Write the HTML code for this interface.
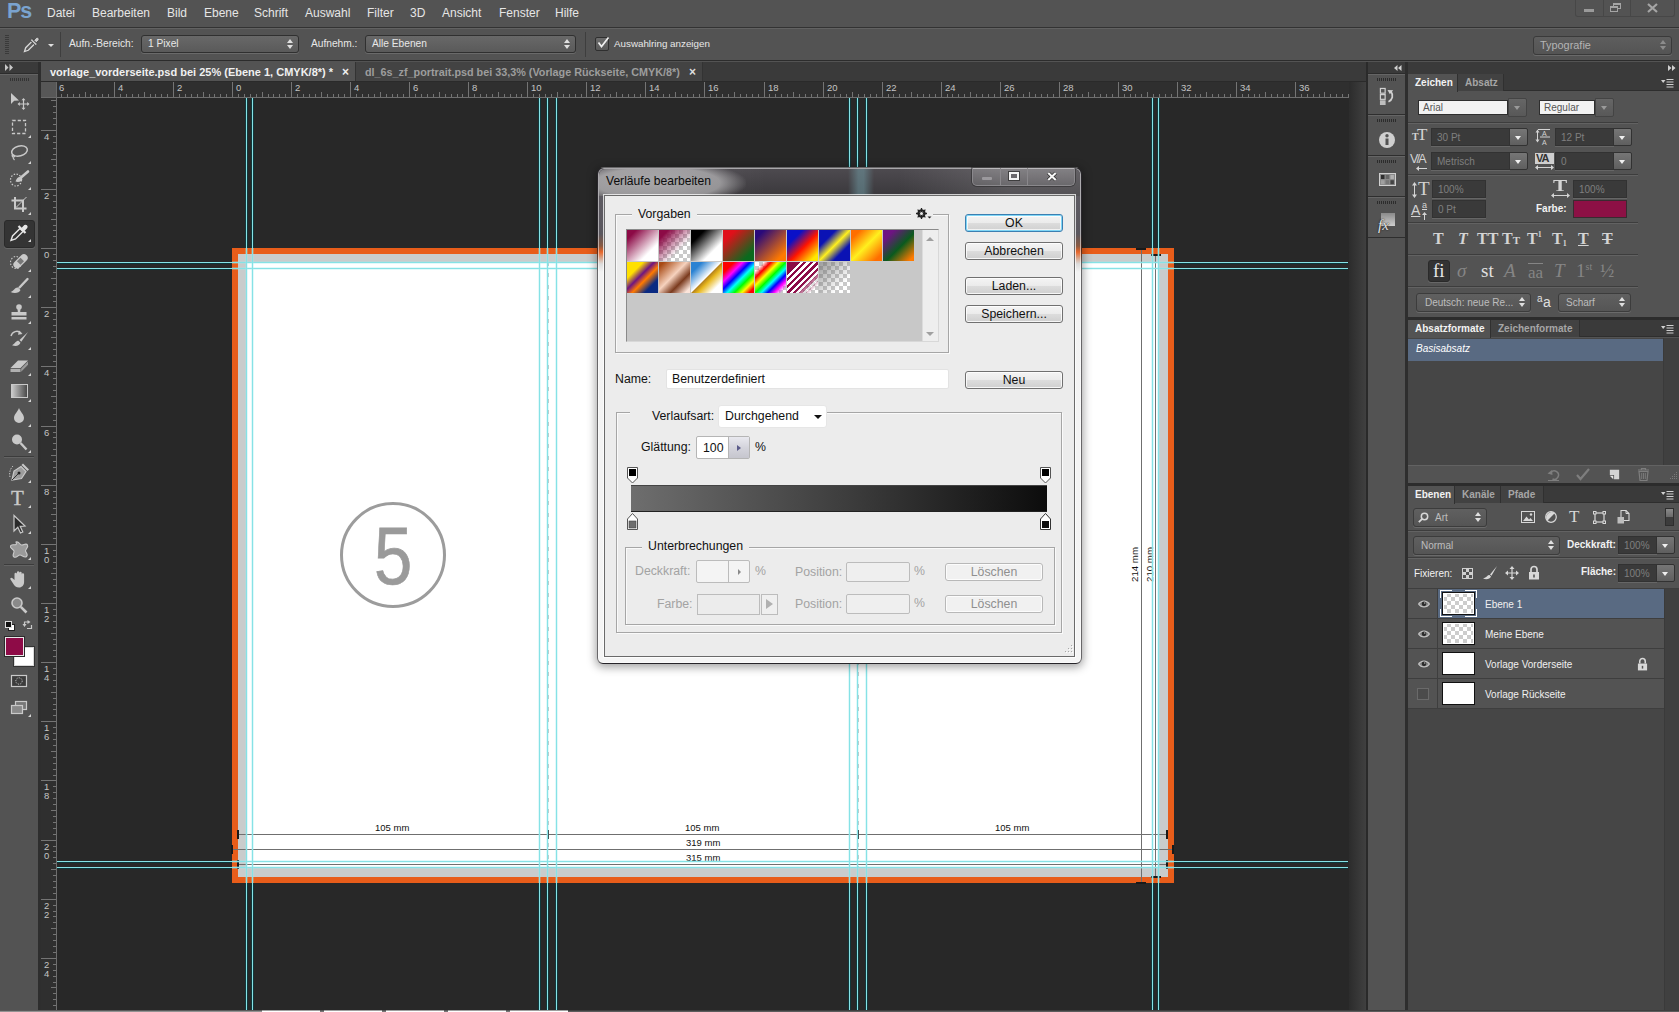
<!DOCTYPE html>
<html><head><meta charset="utf-8"><title>Photoshop</title>
<style>
*{box-sizing:border-box;margin:0;padding:0}
html,body{width:1679px;height:1012px;overflow:hidden;background:#535353}
body{position:relative;font-family:"Liberation Sans",sans-serif;font-size:11px;color:#dcdcdc}
.a{position:absolute}
.t{position:absolute;white-space:nowrap;line-height:1}
svg{position:absolute;overflow:visible}
/* menu */
#menubar{left:0;top:0;width:1679px;height:28px;background:#535353;border-bottom:1px solid #333}
#menubar .t{top:7px;font-size:12px;color:#e6e6e6}
#optbar{left:0;top:28px;width:1679px;height:33px;background:#535353;border-top:1px solid #626262;border-bottom:1px solid #2c2c2c}
.pdd{position:absolute;height:18px;border:1px solid #303030;border-radius:3px;background:linear-gradient(#686868,#5a5a5a);box-shadow:0 1px 0 #6a6a6a;color:#e8e8e8;font-size:10.2px;line-height:16px;padding-left:6px;white-space:nowrap}
.ud:before,.ud:after{content:"";position:absolute;right:5px;border-left:3px solid transparent;border-right:3px solid transparent}
.ud:before{top:3px;border-bottom:4px solid #e0e0e0}
.ud:after{top:9px;border-top:4px solid #e0e0e0}
.ud.dim:before{border-bottom-color:#8c8c8c}.ud.dim:after{border-top-color:#8c8c8c}
#tabbar{left:41px;top:62px;width:1325px;height:20px;background:#3a3a3a;border-bottom:1px solid #2a2a2a}
.dtab{position:absolute;top:0;height:19px;font-size:11px;font-weight:bold;line-height:20px;white-space:nowrap;padding-left:9px}
.rl{font-size:9.5px;color:#c4c4c4}
</style></head><body>
<!-- MENU BAR -->
<div id="menubar" class="a">
 <span class="t" style="left:7px;top:1px;font-size:21.5px;font-weight:bold;color:#7aa3cf;letter-spacing:-1.2px">Ps</span>
 <span class="t" style="left:47px">Datei</span>
 <span class="t" style="left:92px">Bearbeiten</span>
 <span class="t" style="left:167px">Bild</span>
 <span class="t" style="left:204px">Ebene</span>
 <span class="t" style="left:254px">Schrift</span>
 <span class="t" style="left:305px">Auswahl</span>
 <span class="t" style="left:367px">Filter</span>
 <span class="t" style="left:410px">3D</span>
 <span class="t" style="left:442px">Ansicht</span>
 <span class="t" style="left:499px">Fenster</span>
 <span class="t" style="left:555px">Hilfe</span>
 <!-- window controls -->
 <div class="a" style="left:1575px;top:0;width:100px;height:17px;border:1px solid #474747;border-top:none;border-radius:0 0 3px 3px"></div>
 <div class="a" style="left:1603px;top:0;width:1px;height:16px;background:#474747"></div>
 <div class="a" style="left:1630px;top:0;width:1px;height:16px;background:#474747"></div>
 <div class="a" style="left:1584px;top:9px;width:10px;height:3px;background:#9a9a9a"></div>
 <div class="a" style="left:1613px;top:3px;width:8px;height:6px;border:1px solid #a5a5a5;border-top-width:2px"></div>
 <div class="a" style="left:1610px;top:6px;width:8px;height:6px;border:1px solid #a5a5a5;border-top-width:2px;background:#535353"></div>
 <svg style="left:1647px;top:3px" width="11" height="10" viewBox="0 0 11 10"><path d="M1 1 L10 9 M10 1 L1 9" stroke="#a5a5a5" stroke-width="2.2"/></svg>
</div>
<!-- OPTIONS BAR -->
<div id="optbar" class="a">
 <div class="a" style="left:5px;top:6px;width:4px;height:19px;background:repeating-linear-gradient(#3a3a3a 0 1px,transparent 1px 2px)"></div>
 <!-- eyedropper icon -->
 <svg style="left:22px;top:5px" width="20" height="20" viewBox="0 0 20 20"><path d="M2.500 17.500 L3.700 13.700 L10.500 6.900 L13.100 9.500 L6.300 16.300 Z" fill="#5a5a5a" stroke="#dadada" stroke-width="1.300"/><path d="M9.300 5.700 L14.300 10.700" stroke="#3a3a3a" stroke-width="3.200"/><path d="M9.300 5.700 L14.300 10.700" stroke="#c4c4c4" stroke-width="1.800"/><path d="M11.800 6.200 L14.300 3.600 a1.900 1.900 0 0 1 2.600 2.600 L14.300 8.700 Z" fill="#cacaca" stroke="#3a3a3a" stroke-width=".8"/></svg>
 <div class="a" style="left:48px;top:15px;border-left:3.5px solid transparent;border-right:3.5px solid transparent;border-top:3px solid #e0e0e0"></div>
 <div class="a" style="left:60px;top:3px;width:1px;height:25px;background:#3e3e3e"></div>
 <span class="t" style="left:69px;top:10px;font-size:10.2px;color:#e8e8e8">Aufn.-Bereich:</span>
 <div class="pdd ud" style="left:141px;top:6px;width:158px">1 Pixel</div>
 <span class="t" style="left:311px;top:10px;font-size:10.2px;color:#e8e8e8">Aufnehm.:</span>
 <div class="pdd ud" style="left:365px;top:6px;width:211px">Alle Ebenen</div>
 <div class="a" style="left:585px;top:3px;width:1px;height:25px;background:#3e3e3e"></div>
 <div class="a" style="left:595px;top:8px;width:14px;height:14px;border:1px solid #2f2f2f;border-radius:2px;background:linear-gradient(#6b6b6b,#595959)"></div>
 <svg style="left:597px;top:7px" width="13" height="13" viewBox="0 0 13 13"><path d="M1.5 6.5 L4.5 10.5 L11.5 1.5" stroke="#f0f0f0" stroke-width="1.7" fill="none"/></svg>
 <span class="t" style="left:614px;top:10px;font-size:9.8px;color:#e8e8e8">Auswahlring anzeigen</span>
 <div class="pdd ud dim" style="left:1533px;top:7px;width:139px;height:19px;line-height:17px;font-size:10.9px;color:#b4b4b4;background:linear-gradient(#5e5e5e,#545454);border-color:#3a3a3a">Typografie</div>
</div>
<!-- DOC TAB BAR -->
<div id="tabbar" class="a">
 <div class="dtab" style="left:0;width:314px;background:#535353;color:#f0f0f0">vorlage_vorderseite.psd bei 25% (Ebene 1, CMYK/8*) *<span style="position:absolute;right:6px;top:0;font-size:12px">×</span></div>
 <div class="dtab" style="left:314px;width:348px;background:#434343;color:#9d9d9d;font-size:10.8px;border-left:1px solid #333;border-right:1px solid #333">dl_6s_zf_portrait.psd bei 33,3% (Vorlage Rückseite, CMYK/8*)<span style="position:absolute;right:6px;top:0;font-size:12px;color:#ddd">×</span></div>
</div>
<!-- TOOLBAR -->
<style>
#toolbar{left:0;top:62px;width:38px;height:948px;background:#535353}
.fly{position:absolute;left:28px;width:0;height:0;margin-top:-1px;border-left:3px solid transparent;border-bottom:3px solid #d4d4d4}
.ti{left:7px}
</style>
<div class="a" style="left:38px;top:62px;width:3px;height:948px;background:#2e2e2e"></div>
<div id="toolbar" class="a">
 <div class="a" style="left:0;top:0;width:38px;height:12px;background:#3a3a3a;border-bottom:1px solid #2c2c2c"></div>
 <svg style="left:5px;top:2px" width="9" height="7" viewBox="0 0 9 7"><path d="M0 0 L3.5 3.5 L0 7Z M4.5 0 L8 3.5 L4.5 7Z" fill="#c8c8c8"/></svg>
 <div class="a" style="left:0;top:12px;width:38px;height:1px;background:#646464"></div>
 <div class="a" style="left:10px;top:16px;width:20px;height:3px;background:repeating-linear-gradient(90deg,#333 0 1px,transparent 1px 2px)"></div>
 <!-- selected tool bg -->
 <div class="a" style="left:4px;top:158px;width:31px;height:28px;background:#343434;border:1px solid #2a2a2a;border-radius:3px;box-shadow:0 1px 0 #666"></div>
 <!-- move y=101 (rel 39) -->
 <svg class="ti" style="top:28px" width="24" height="24" viewBox="0 0 24 24"><path d="M4 3 L4 14 L7.2 10.8 L12 10.5 Z" fill="#c9c9c9"/><path d="M16.5 9.5v9M12 14h9" stroke="#c9c9c9" stroke-width="1.2"/><path d="M16.5 8l-2 2.3h4zM16.5 20l-2-2.3h4zM10.5 14l2.3-2v4zM22.5 14l-2.3-2v4z" fill="#c9c9c9"/></svg>
 <!-- marquee y=127 (65) -->
 <svg class="ti" style="top:53px" width="24" height="24" viewBox="0 0 24 24"><rect x="5.5" y="5.5" width="13" height="13" fill="none" stroke="#c9c9c9" stroke-width="1.3" stroke-dasharray="3.2 2"/></svg>
 <div class="fly" style="top:74px"></div>
 <!-- lasso y=153 (91) -->
 <svg class="ti" style="top:79px" width="24" height="24" viewBox="0 0 24 24"><ellipse cx="12.5" cy="10" rx="8" ry="5" transform="rotate(-15 12.5 10)" fill="none" stroke="#c9c9c9" stroke-width="1.5"/><path d="M6 13 c-1.5 1 -1 3 0.5 3 c1.5 0 1.5 -2 0 -2 c-1 0 -1 3 1 5" fill="none" stroke="#c9c9c9" stroke-width="1.2"/></svg>
 <div class="fly" style="top:100px"></div>
 <!-- quick select y=179 (117) -->
 <svg class="ti" style="top:105px" width="24" height="24" viewBox="0 0 24 24"><ellipse cx="9" cy="13" rx="5.5" ry="6" fill="none" stroke="#c9c9c9" stroke-width="1.2" stroke-dasharray="1.5 1.5"/><path d="M21 4.500 L14 10.500" stroke="#c9c9c9" stroke-width="2.600" stroke-linecap="round"/><path d="M13.500 10 c-2.500 -.5 -4 1.500 -5 4.500 c3 1 6.500 0 7 -2.500 Z" fill="#c9c9c9"/></svg>
 <div class="fly" style="top:126px"></div>
 <!-- crop y=204 (142) -->
 <svg class="ti" style="top:130px" width="24" height="24" viewBox="0 0 24 24"><path d="M8 5v11.500H19.500M4.500 8.500H16V20" fill="none" stroke="#c9c9c9" stroke-width="2"/><path d="M19.500 5 L9 15.500" stroke="#c9c9c9" stroke-width="1"/></svg>
 <div class="fly" style="top:151px"></div>
 <!-- eyedropper y=232 (170) -->
 <svg class="ti" style="top:158px" width="24" height="24" viewBox="0 0 24 24"><path d="M4 20.5 L5.5 16 L13 8.5 L16 11.5 L8.5 19 Z" fill="none" stroke="#e6e6e6" stroke-width="1.4"/><path d="M11.5 6 L18.5 13" stroke="#e6e6e6" stroke-width="2.2"/><path d="M14.5 8 L17.3 5 a2.2 2.2 0 0 1 3 3 L17.5 11 Z" fill="#e6e6e6"/></svg>
 <div class="fly" style="top:178px"></div>
 <!-- heal y=261 (199) -->
 <svg class="ti" style="top:187px" width="24" height="24" viewBox="0 0 24 24"><ellipse cx="9" cy="13.5" rx="5.5" ry="6" fill="none" stroke="#c9c9c9" stroke-width="1.1" stroke-dasharray="1.5 1.5"/><rect x="5" y="8.5" width="17" height="7.5" rx="3.7" transform="rotate(-45 13.5 12.2)" fill="#c9c9c9"/><rect x="11" y="9.7" width="5" height="5" transform="rotate(-45 13.5 12.2)" fill="#777"/></svg>
 <div class="fly" style="top:208px"></div>
 <!-- brush y=287 (225) -->
 <svg class="ti" style="top:213px" width="24" height="24" viewBox="0 0 24 24"><path d="M20.500 4 L12.500 12.500" stroke="#c9c9c9" stroke-width="2.400" stroke-linecap="round"/><path d="M11 12.500 c-3 -.5 -3.500 3 -7.500 4.500 c4 2 9 1 10 -2 Z" fill="#c9c9c9"/></svg>
 <div class="fly" style="top:234px"></div>
 <!-- stamp y=313 (251) -->
 <svg class="ti" style="top:239px" width="24" height="24" viewBox="0 0 24 24"><circle cx="12" cy="6" r="2.800" fill="#c9c9c9"/><path d="M10.500 7h3l-.3 4h6.300v3.500h-15V11h6.300z" fill="#c9c9c9"/><rect x="4.5" y="16" width="15" height="2.5" fill="#c9c9c9"/></svg>
 <div class="fly" style="top:260px"></div>
 <!-- history brush y=339 (277) -->
 <svg class="ti" style="top:265px" width="24" height="24" viewBox="0 0 24 24"><path d="M21 5 L12.5 13 L14.3 14.8 Z" fill="#c9c9c9"/><path d="M11.5 13.8 c-3 0 -3 2.5 -6.5 4.5 c4 1.5 7.5 0.5 8.5 -2.5 Z" fill="#c9c9c9"/><path d="M4 9 a6 6 0 0 1 10 -3" fill="none" stroke="#c9c9c9" stroke-width="1.4"/><path d="M12 3.5 l3.5 3.5 l-4.5 0.8z" fill="#c9c9c9"/></svg>
 <div class="fly" style="top:286px"></div>
 <!-- eraser y=365 (303) -->
 <svg class="ti" style="top:291px" width="24" height="24" viewBox="0 0 24 24"><path d="M3.5 15 L11 7.5 H21 L13.5 15 Z" fill="#c9c9c9"/><path d="M3.5 15.8 h10 v3.2 h-10z" fill="#b0b0b0"/><path d="M14.2 15.5 L21 8.6 v3.2 L14.2 18.8z" fill="#9a9a9a"/></svg>
 <div class="fly" style="top:312px"></div>
 <!-- gradient y=391 (329) -->
 <div class="a" style="left:11px;top:322px;width:17px;height:14px;border:1px solid #c9c9c9;background:linear-gradient(90deg,#c9c9c9,#4a4a4a)"></div>
 <div class="fly" style="top:338px"></div>
 <!-- blur y=416 (354) -->
 <svg class="ti" style="top:342px" width="24" height="24" viewBox="0 0 24 24"><path d="M12 4 c1.5 4 5 6.5 5 10 a5 5 0 0 1 -10 0 c0 -3.5 3.5 -6 5 -10z" fill="#c9c9c9"/></svg>
 <div class="fly" style="top:363px"></div>
 <!-- dodge y=442 (380) -->
 <svg class="ti" style="top:368px" width="24" height="24" viewBox="0 0 24 24"><circle cx="10" cy="9.5" r="5" fill="#c9c9c9"/><path d="M13.5 13 L19.5 19.5" stroke="#c9c9c9" stroke-width="2.4"/></svg>
 <div class="fly" style="top:389px"></div>
 <div class="a" style="left:4px;top:394px;width:30px;height:1px;background:#3c3c3c"></div><div class="a" style="left:4px;top:395px;width:30px;height:1px;background:#636363"></div>
 <!-- pen y=472 (410) -->
 <svg class="ti" style="top:398px" width="24" height="24" viewBox="0 0 24 24"><path d="M5 20 L7 11 L14 6.5 L19 11.5 L14.5 18.5 Z" fill="#9c9c9c" stroke="#c9c9c9" stroke-width="1.2"/><path d="M5 20 L11.5 13.5" stroke="#333" stroke-width="1"/><circle cx="12" cy="13" r="1.500" fill="#222"/><path d="M14.5 5 L20.5 11 L22 9.5 L16 3.5z" fill="#c9c9c9"/><path d="M3 17 c-1 -4 0 -8 3 -11" fill="none" stroke="#c9c9c9" stroke-width="1" stroke-dasharray="1.3 1.3"/></svg>
 <div class="fly" style="top:419px"></div>
 <!-- T y=497 (435) -->
 <span class="t" style="left:11px;top:426px;font-family:'Liberation Serif',serif;font-size:21px;color:#c9c9c9;-webkit-text-stroke:.35px #c9c9c9">T</span>
 <div class="fly" style="top:444px"></div>
 <!-- path select y=524 (462) -->
 <svg class="ti" style="top:450px" width="24" height="24" viewBox="0 0 24 24"><path d="M7 3.5 L7 19 L10.8 15.3 L13.5 21 L15.8 20 L13.2 14.3 L18 14 Z" fill="#2a2a2a" stroke="#c9c9c9" stroke-width="1.2"/></svg>
 <div class="fly" style="top:470px"></div>
 <!-- shape y=550 (488) -->
 <svg class="ti" style="top:476px" width="24" height="24" viewBox="0 0 24 24"><path d="M9 4 c3 -1 3.5 2.5 5.5 3 c2 .5 4.5 -2.5 6 0 c1.5 2.500 -2.500 4 -2 6 c.5 2 3 3.500 1 5.500 c-2 2 -4.500 -1.500 -6.500 -1.500 c-2 0 -3.500 3.500 -6 2 c-2.500 -1.500 .5 -4 0 -6 c-.5 -2 -4.500 -2.500 -3.500 -5 c1 -2.500 4 -.5 5.500 -1.500 c1.500 -1 -.5 -2 0 -2.500z" fill="#9a9a9a" stroke="#c9c9c9" stroke-width="1.1"/></svg>
 <div class="fly" style="top:496px"></div>
 <div class="a" style="left:4px;top:502px;width:30px;height:1px;background:#3c3c3c"></div><div class="a" style="left:4px;top:503px;width:30px;height:1px;background:#636363"></div>
 <!-- hand y=579 (517) -->
 <svg class="ti" style="top:505px" width="24" height="24" viewBox="0 0 24 24"><path d="M7.500 13 V7 a1.200 1.200 0 0 1 2.400 0 V5.500 a1.200 1.200 0 0 1 2.400 0 V6 a1.200 1.200 0 0 1 2.400 0 V7.500 a1.200 1.200 0 0 1 2.400 0 V15 c0 3 -2 5.500 -5 5.500 c-3 0 -4.500 -1.500 -6 -4 L3.500 12.500 c-.8 -1.500 1 -2.500 2 -1.200z" fill="#c9c9c9"/></svg>
 <div class="fly" style="top:525px"></div>
 <!-- zoom y=605 (543) -->
 <svg class="ti" style="top:531px" width="24" height="24" viewBox="0 0 24 24"><circle cx="10" cy="10" r="5" fill="#8a8a8a" stroke="#c9c9c9" stroke-width="1.6"/><path d="M13.800 13.800 L19.500 19.500" stroke="#c9c9c9" stroke-width="2.600"/></svg>
 <!-- default / swap colors y=625 (563) -->
 <div class="a" style="left:8px;top:562px;width:7px;height:7px;background:#fff;border:1px solid #222"></div>
 <div class="a" style="left:5px;top:559px;width:7px;height:7px;background:#111;border:1px solid #ddd"></div>
 <svg style="left:22px;top:557px" width="12" height="12" viewBox="0 0 12 12"><path d="M2.500 5.500 V3 H7 M5 9.500 H9.500 V6" fill="none" stroke="#c9c9c9" stroke-width="1.200"/><path d="M2.500 8 L0.500 5 h4z M8.500 3 L5.500 1 v4z" fill="#c9c9c9"/></svg>
 <!-- fg/bg y 637-665 -->
 <div class="a" style="left:14px;top:585px;width:20px;height:19px;background:#fff;border:1px solid #d9d9d9;box-shadow:0 0 0 1px #333"></div>
 <div class="a" style="left:5px;top:575px;width:19px;height:19px;background:#8e0b47;border:1px solid #e8e8e8;box-shadow:0 0 0 1px #2b2b2b"></div>
 <!-- quick mask y=681 (619) -->
 <svg class="ti" style="top:607px" width="24" height="24" viewBox="0 0 24 24"><rect x="4.500" y="6.500" width="15" height="11" fill="#3c3c3c" stroke="#c9c9c9" stroke-width="1.200"/><circle cx="12" cy="12" r="3.200" fill="none" stroke="#c9c9c9" stroke-width="1" stroke-dasharray="1.200 1.200"/></svg>
 <!-- screen mode y=707 (645) -->
 <svg class="ti" style="top:633px" width="24" height="24" viewBox="0 0 24 24"><rect x="8.500" y="6.500" width="11" height="8" fill="#777" stroke="#c9c9c9" stroke-width="1.200"/><rect x="4.500" y="10.500" width="11" height="8" fill="#8a8a8a" stroke="#c9c9c9" stroke-width="1.200"/></svg>
 <div class="fly" style="top:653px"></div>
</div>
<!-- RULERS -->
<div class="a" style="left:41px;top:82px;width:16px;height:16px;background:#575757;border-right:1px solid #6a6a6a;border-bottom:1px solid #6a6a6a"></div>
<div class="a" id="hruler" style="left:57px;top:82px;width:1292px;height:16px;background:#2f2f2f;border-bottom:1px solid #6e6e6e;overflow:hidden">
<svg style="left:0;top:0" width="1292" height="16"><path d="M4.5 15v-3M10.5 15v-3M16.5 15v-3M22.5 15v-3M28.5 15v-5M33.5 15v-3M39.5 15v-3M45.5 15v-3M51.5 15v-3M57.5 15v-15M63.5 15v-3M69.5 15v-3M75.5 15v-3M81.5 15v-3M87.5 15v-5M93.5 15v-3M98.5 15v-3M104.5 15v-3M110.5 15v-3M116.5 15v-15M122.5 15v-3M128.5 15v-3M134.5 15v-3M140.5 15v-3M146.5 15v-5M152.5 15v-3M157.5 15v-3M163.5 15v-3M169.5 15v-3M175.5 15v-15M181.5 15v-3M187.5 15v-3M193.5 15v-3M199.5 15v-3M205.5 15v-5M211.5 15v-3M216.5 15v-3M222.5 15v-3M228.5 15v-3M234.5 15v-15M240.5 15v-3M246.5 15v-3M252.5 15v-3M258.5 15v-3M264.5 15v-5M270.5 15v-3M276.5 15v-3M281.5 15v-3M287.5 15v-3M293.5 15v-15M299.5 15v-3M305.5 15v-3M311.5 15v-3M317.5 15v-3M323.5 15v-5M329.5 15v-3M335.5 15v-3M340.5 15v-3M346.5 15v-3M352.5 15v-15M358.5 15v-3M364.5 15v-3M370.5 15v-3M376.5 15v-3M382.5 15v-5M388.5 15v-3M394.5 15v-3M400.5 15v-3M405.5 15v-3M411.5 15v-15M417.5 15v-3M423.5 15v-3M429.5 15v-3M435.5 15v-3M441.5 15v-5M447.5 15v-3M453.5 15v-3M459.5 15v-3M464.5 15v-3M470.5 15v-15M476.5 15v-3M482.5 15v-3M488.5 15v-3M494.5 15v-3M500.5 15v-5M506.5 15v-3M512.5 15v-3M518.5 15v-3M524.5 15v-3M529.5 15v-15M535.5 15v-3M541.5 15v-3M547.5 15v-3M553.5 15v-3M559.5 15v-5M565.5 15v-3M571.5 15v-3M577.5 15v-3M583.5 15v-3M588.5 15v-15M594.5 15v-3M600.5 15v-3M606.5 15v-3M612.5 15v-3M618.5 15v-5M624.5 15v-3M630.5 15v-3M636.5 15v-3M642.5 15v-3M647.5 15v-15M653.5 15v-3M659.5 15v-3M665.5 15v-3M671.5 15v-3M677.5 15v-5M683.5 15v-3M689.5 15v-3M695.5 15v-3M701.5 15v-3M707.5 15v-15M712.5 15v-3M718.5 15v-3M724.5 15v-3M730.5 15v-3M736.5 15v-5M742.5 15v-3M748.5 15v-3M754.5 15v-3M760.5 15v-3M766.5 15v-15M771.5 15v-3M777.5 15v-3M783.5 15v-3M789.5 15v-3M795.5 15v-5M801.5 15v-3M807.5 15v-3M813.5 15v-3M819.5 15v-3M825.5 15v-15M831.5 15v-3M836.5 15v-3M842.5 15v-3M848.5 15v-3M854.5 15v-5M860.5 15v-3M866.5 15v-3M872.5 15v-3M878.5 15v-3M884.5 15v-15M890.5 15v-3M895.5 15v-3M901.5 15v-3M907.5 15v-3M913.5 15v-5M919.5 15v-3M925.5 15v-3M931.5 15v-3M937.5 15v-3M943.5 15v-15M949.5 15v-3M954.5 15v-3M960.5 15v-3M966.5 15v-3M972.5 15v-5M978.5 15v-3M984.5 15v-3M990.5 15v-3M996.5 15v-3M1002.5 15v-15M1008.5 15v-3M1014.5 15v-3M1019.5 15v-3M1025.5 15v-3M1031.5 15v-5M1037.5 15v-3M1043.5 15v-3M1049.5 15v-3M1055.5 15v-3M1061.5 15v-15M1067.5 15v-3M1073.5 15v-3M1078.5 15v-3M1084.5 15v-3M1090.5 15v-5M1096.5 15v-3M1102.5 15v-3M1108.5 15v-3M1114.5 15v-3M1120.5 15v-15M1126.5 15v-3M1132.5 15v-3M1138.5 15v-3M1143.5 15v-3M1149.5 15v-5M1155.5 15v-3M1161.5 15v-3M1167.5 15v-3M1173.5 15v-3M1179.5 15v-15M1185.5 15v-3M1191.5 15v-3M1197.5 15v-3M1202.5 15v-3M1208.5 15v-5M1214.5 15v-3M1220.5 15v-3M1226.5 15v-3M1232.5 15v-3M1238.5 15v-15M1244.5 15v-3M1250.5 15v-3M1256.5 15v-3M1262.5 15v-3M1267.5 15v-5M1273.5 15v-3M1279.5 15v-3M1285.5 15v-3M1291.5 15v-3" stroke="#747474" stroke-width="1" shape-rendering="crispEdges" fill="none"/></svg>
<span class="t rl" style="left:2px;top:1px">6</span>
<span class="t rl" style="left:61px;top:1px">4</span>
<span class="t rl" style="left:120px;top:1px">2</span>
<span class="t rl" style="left:179px;top:1px">0</span>
<span class="t rl" style="left:238px;top:1px">2</span>
<span class="t rl" style="left:297px;top:1px">4</span>
<span class="t rl" style="left:356px;top:1px">6</span>
<span class="t rl" style="left:415px;top:1px">8</span>
<span class="t rl" style="left:474px;top:1px">10</span>
<span class="t rl" style="left:533px;top:1px">12</span>
<span class="t rl" style="left:592px;top:1px">14</span>
<span class="t rl" style="left:651px;top:1px">16</span>
<span class="t rl" style="left:711px;top:1px">18</span>
<span class="t rl" style="left:770px;top:1px">20</span>
<span class="t rl" style="left:829px;top:1px">22</span>
<span class="t rl" style="left:888px;top:1px">24</span>
<span class="t rl" style="left:947px;top:1px">26</span>
<span class="t rl" style="left:1006px;top:1px">28</span>
<span class="t rl" style="left:1065px;top:1px">30</span>
<span class="t rl" style="left:1124px;top:1px">32</span>
<span class="t rl" style="left:1183px;top:1px">34</span>
<span class="t rl" style="left:1242px;top:1px">36</span>
</div>
<div class="a" id="vruler" style="left:41px;top:98px;width:16px;height:912px;background:#2f2f2f;border-right:1px solid #6e6e6e;overflow:hidden">
<svg style="left:0;top:0" width="16" height="912"><path d="M15 2.5h-5M15 8.5h-3M15 14.5h-3M15 20.5h-3M15 26.5h-3M15 32.5h-15M15 38.5h-3M15 44.5h-3M15 50.5h-3M15 56.5h-3M15 61.5h-5M15 67.5h-3M15 73.5h-3M15 79.5h-3M15 85.5h-3M15 91.5h-15M15 97.5h-3M15 103.5h-3M15 109.5h-3M15 115.5h-3M15 121.5h-5M15 127.5h-3M15 132.5h-3M15 138.5h-3M15 144.5h-3M15 150.5h-15M15 156.5h-3M15 162.5h-3M15 168.5h-3M15 174.5h-3M15 180.5h-5M15 186.5h-3M15 192.5h-3M15 198.5h-3M15 203.5h-3M15 209.5h-15M15 215.5h-3M15 221.5h-3M15 227.5h-3M15 233.5h-3M15 239.5h-5M15 245.5h-3M15 251.5h-3M15 257.5h-3M15 263.5h-3M15 268.5h-15M15 274.5h-3M15 280.5h-3M15 286.5h-3M15 292.5h-3M15 298.5h-5M15 304.5h-3M15 310.5h-3M15 316.5h-3M15 322.5h-3M15 328.5h-15M15 334.5h-3M15 339.5h-3M15 345.5h-3M15 351.5h-3M15 357.5h-5M15 363.5h-3M15 369.5h-3M15 375.5h-3M15 381.5h-3M15 387.5h-15M15 393.5h-3M15 399.5h-3M15 405.5h-3M15 410.5h-3M15 416.5h-5M15 422.5h-3M15 428.5h-3M15 434.5h-3M15 440.5h-3M15 446.5h-15M15 452.5h-3M15 458.5h-3M15 464.5h-3M15 470.5h-3M15 475.5h-5M15 481.5h-3M15 487.5h-3M15 493.5h-3M15 499.5h-3M15 505.5h-15M15 511.5h-3M15 517.5h-3M15 523.5h-3M15 529.5h-3M15 535.5h-5M15 541.5h-3M15 546.5h-3M15 552.5h-3M15 558.5h-3M15 564.5h-15M15 570.5h-3M15 576.5h-3M15 582.5h-3M15 588.5h-3M15 594.5h-5M15 600.5h-3M15 606.5h-3M15 611.5h-3M15 617.5h-3M15 623.5h-15M15 629.5h-3M15 635.5h-3M15 641.5h-3M15 647.5h-3M15 653.5h-5M15 659.5h-3M15 665.5h-3M15 671.5h-3M15 677.5h-3M15 682.5h-15M15 688.5h-3M15 694.5h-3M15 700.5h-3M15 706.5h-3M15 712.5h-5M15 718.5h-3M15 724.5h-3M15 730.5h-3M15 736.5h-3M15 742.5h-15M15 748.5h-3M15 753.5h-3M15 759.5h-3M15 765.5h-3M15 771.5h-5M15 777.5h-3M15 783.5h-3M15 789.5h-3M15 795.5h-3M15 801.5h-15M15 807.5h-3M15 813.5h-3M15 818.5h-3M15 824.5h-3M15 830.5h-5M15 836.5h-3M15 842.5h-3M15 848.5h-3M15 854.5h-3M15 860.5h-15M15 866.5h-3M15 872.5h-3M15 878.5h-3M15 884.5h-3M15 889.5h-5M15 895.5h-3M15 901.5h-3M15 907.5h-3" stroke="#747474" stroke-width="1" shape-rendering="crispEdges" fill="none"/></svg>
<span class="t rl" style="left:3px;top:34px">4</span>
<span class="t rl" style="left:3px;top:93px">2</span>
<span class="t rl" style="left:3px;top:152px">0</span>
<span class="t rl" style="left:3px;top:211px">2</span>
<span class="t rl" style="left:3px;top:270px">4</span>
<span class="t rl" style="left:3px;top:330px">6</span>
<span class="t rl" style="left:3px;top:389px">8</span>
<span class="t rl" style="left:3px;top:448px">1</span>
<span class="t rl" style="left:3px;top:457px">0</span>
<span class="t rl" style="left:3px;top:507px">1</span>
<span class="t rl" style="left:3px;top:516px">2</span>
<span class="t rl" style="left:3px;top:566px">1</span>
<span class="t rl" style="left:3px;top:575px">4</span>
<span class="t rl" style="left:3px;top:625px">1</span>
<span class="t rl" style="left:3px;top:634px">6</span>
<span class="t rl" style="left:3px;top:684px">1</span>
<span class="t rl" style="left:3px;top:693px">8</span>
<span class="t rl" style="left:3px;top:744px">2</span>
<span class="t rl" style="left:3px;top:753px">0</span>
<span class="t rl" style="left:3px;top:803px">2</span>
<span class="t rl" style="left:3px;top:812px">2</span>
<span class="t rl" style="left:3px;top:862px">2</span>
<span class="t rl" style="left:3px;top:871px">4</span>
</div>
<!-- CANVAS -->
<style>
#canvas{left:57px;top:98px;width:1292px;height:912px;background:#282828;overflow:hidden}
#cv{position:absolute;left:-57px;top:-98px;width:1679px;height:1012px}
.vg{position:absolute;top:98px;width:1px;height:912px;background:#86e2e6}
.gd .vg{box-shadow:-1px 0 0 rgba(160,236,240,.3),1px 0 0 rgba(160,236,240,.3)}
.gs .vg{box-shadow:-1px 0 0 rgba(0,70,74,.55),1px 0 0 rgba(0,70,74,.55)}
.hg{position:absolute;left:57px;height:1px;width:1291px;background:#86e2e6}
.gd .hg{box-shadow:0 -1px 0 rgba(160,236,240,.3),0 1px 0 rgba(160,236,240,.3)}
.gs .hg{box-shadow:0 1px 0 rgba(0,60,64,.7)}
.dl{position:absolute;background:#6f6f6f}
.tk{position:absolute;background:#1a1a1a}
.dim{position:absolute;font-size:9.5px;color:#111;white-space:nowrap;line-height:1}
</style>
<div id="canvas" class="a"><div id="cv">
 <div class="gs">
 <!-- guides under -->
 <div class="hg" style="top:262px"></div><div class="hg" style="top:268px"></div>
 <div class="hg" style="top:861px"></div><div class="hg" style="top:867px"></div>
 <div class="vg" style="left:246px"></div><div class="vg" style="left:252px"></div>
 <div class="vg" style="left:539px"></div><div class="vg" style="left:547px"></div><div class="vg" style="left:556px"></div>
 <div class="vg" style="left:849px"></div><div class="vg" style="left:857px"></div><div class="vg" style="left:866px"></div>
 <div class="vg" style="left:1152px"></div><div class="vg" style="left:1158px"></div>
 </div>
 <!-- document -->
 <div class="a" style="left:232px;top:248px;width:942px;height:635px;background:#e85d1a"></div>
 <div class="a" style="left:238px;top:254px;width:930px;height:623px;background:#c9cccc"></div>
 <div class="a" style="left:246px;top:262px;width:913px;height:606px;background:#fff"></div>
 <!-- fold dashed lines -->
 <div class="a" style="left:548px;top:262px;width:1px;height:606px;background:repeating-linear-gradient(#c2c2c2 0 4px,transparent 4px 11.400px)"></div>
 <div class="a" style="left:858px;top:262px;width:1px;height:606px;background:repeating-linear-gradient(#c2c2c2 0 4px,transparent 4px 11.400px)"></div>
 <!-- circle 5 -->
 <div class="a" style="left:340px;top:502px;width:106px;height:106px;border:3px solid #9c9c9c;border-radius:50%"></div>
 <span class="t" style="left:373.600px;top:515.800px;font-size:81px;color:#9a9a9a;-webkit-text-stroke:.7px #9a9a9a;transform:scaleX(.85);transform-origin:0 0">5</span>
 <!-- dimension lines -->
 <div class="dl" style="left:238px;top:834px;width:930px;height:1px"></div>
 <div class="dl" style="left:232px;top:849px;width:942px;height:1px"></div>
 <div class="dl" style="left:238px;top:864px;width:930px;height:1px"></div>
 <div class="dl" style="left:1141px;top:248px;width:1px;height:635px"></div>
 <div class="dl" style="left:1155px;top:254px;width:1px;height:623px"></div>
 <div class="tk" style="left:237px;top:830px;width:2px;height:9px"></div>
 <div class="tk" style="left:547px;top:830px;width:2px;height:9px"></div>
 <div class="tk" style="left:857px;top:830px;width:2px;height:9px"></div>
 <div class="tk" style="left:1166px;top:830px;width:2px;height:9px"></div>
 <div class="tk" style="left:231px;top:845px;width:2px;height:9px"></div>
 <div class="tk" style="left:1172px;top:845px;width:2px;height:9px"></div>
 <div class="tk" style="left:237px;top:860px;width:2px;height:9px"></div>
 <div class="tk" style="left:1166px;top:860px;width:2px;height:9px"></div>
 <div class="tk" style="left:1136px;top:248px;width:10px;height:2px"></div>
 <div class="tk" style="left:1136px;top:882px;width:10px;height:2px"></div>
 <div class="tk" style="left:1151px;top:254px;width:10px;height:2px"></div>
 <div class="tk" style="left:1151px;top:876px;width:10px;height:2px"></div>
 <span class="dim" style="left:375px;top:823px">105 mm</span>
 <span class="dim" style="left:685px;top:823px">105 mm</span>
 <span class="dim" style="left:995px;top:823px">105 mm</span>
 <span class="dim" style="left:685px;top:838px;background:#fff;padding:0 1px">319 mm</span>
 <span class="dim" style="left:685px;top:853px;background:#fff;padding:0 1px">315 mm</span>
 <span class="dim" style="left:1130px;top:582px;transform:rotate(-90deg);transform-origin:0 0;font-size:9.7px">214 mm</span>
 <span class="dim" style="left:1145px;top:582px;transform:rotate(-90deg);transform-origin:0 0;font-size:9.7px">210 mm</span>
 <div class="a" style="left:232px;top:248px;width:942px;height:635px;overflow:hidden"><div class="a gd" style="left:-232px;top:-248px;width:1679px;height:1012px">
 <!-- guides -->
 <div class="hg" style="top:262px"></div><div class="hg" style="top:268px"></div>
 <div class="hg" style="top:861px"></div><div class="hg" style="top:867px"></div>
 <div class="vg" style="left:246px"></div><div class="vg" style="left:252px"></div>
 <div class="vg" style="left:539px"></div><div class="vg" style="left:547px"></div><div class="vg" style="left:556px"></div>
 <div class="vg" style="left:849px"></div><div class="vg" style="left:857px"></div><div class="vg" style="left:866px"></div>
 <div class="vg" style="left:1152px"></div><div class="vg" style="left:1158px"></div>
 </div></div>
</div></div>
<div class="a" style="left:1349px;top:82px;width:17px;height:928px;background:linear-gradient(90deg,#2c2c2c,#404040)"></div>
<div class="a" style="left:1366px;top:62px;width:2px;height:948px;background:#2a2a2a"></div>
<!-- DIALOG -->
<style>
#dlg{left:597px;top:167px;width:485px;height:497px;border-radius:7px 7px 6px 6px;border:1px solid rgba(10,8,12,.6);background-clip:padding-box;box-shadow:0 2px 10px 1px rgba(0,0,0,.38),inset 0 0 0 1px rgba(255,255,255,.5);
 background:linear-gradient(#514e54 0,#5e5b62 28px,#5a575e 66px,#8a5a42 78px,#e9672a 84px,#d9a58a 90px,#dcdcdc 96px,#f3f3f3 104px,#f5f5f5 100%)}
#dlg .tbar{left:1px;top:1px;width:481px;height:27px;border-radius:6px 6px 0 0;background:linear-gradient(90deg,rgba(255,255,255,.1),rgba(255,255,255,0) 35%,rgba(255,255,255,0) 62%,rgba(255,255,255,.13) 85%,rgba(255,255,255,.13)),linear-gradient(#4d4a4f,#3a383c);overflow:hidden}
#cl{left:6px;top:27px;width:471px;height:462px;background:#ececec;border:1px solid #6a6a6a;box-shadow:0 0 0 1px rgba(255,255,255,.75);color:#111;font-size:12px}
.gb{position:absolute;border:1px solid #a6a6a6;box-shadow:inset 1px 1px 0 #fafafa,1px 1px 0 #fafafa}
.gl{position:absolute;background:#ececec;padding:0 6px;line-height:14px;white-space:nowrap;font-size:12.3px}
.wb{position:absolute;width:98px;height:18px;border:1px solid #707070;border-radius:3px;background:linear-gradient(#f4f4f4 0,#ebebeb 48%,#dcdcdc 52%,#cfcfcf 100%);box-shadow:inset 0 0 0 1px rgba(255,255,255,.8);text-align:center;line-height:16px;font-size:12.3px;color:#111}
.wb.dis{border-color:#b8b8b8;background:#f1f1f1;color:#8f8f8f}
.inp{position:absolute;background:#fff;border:1px solid #c9c9c9;border-radius:2px}
.lb{position:absolute;white-space:nowrap;line-height:14px;font-size:12.3px}
.dis{color:#a3a3a3}
.sw{position:absolute;width:31px;height:31px}
.chk{background-color:#fff;background-image:linear-gradient(45deg,#c9c9c9 25%,transparent 25%,transparent 75%,#c9c9c9 75%),linear-gradient(45deg,#c9c9c9 25%,transparent 25%,transparent 75%,#c9c9c9 75%);background-size:8px 8px;background-position:0 0,4px 4px}
</style>
<div id="dlg" class="a">
 <div class="tbar a">
  <div class="a" style="left:-29px;top:-8px;width:176px;height:44px;background:radial-gradient(ellipse at center,rgba(255,255,255,.5) 0,rgba(255,255,255,.43) 50%,rgba(255,255,255,0) 72%)"></div>
  <div class="a" style="left:249px;top:0;width:26px;height:28px;background:linear-gradient(90deg,rgba(120,170,180,0),rgba(120,170,180,.45) 40%,rgba(120,170,180,.45) 60%,rgba(120,170,180,0))"></div>
 </div>
 <span class="t" style="left:8px;top:7px;font-size:12.1px;color:#0c0c0c">Verläufe bearbeiten</span>
 <!-- caption buttons -->
 <div class="a" style="left:374px;top:0;width:103px;height:18px;border:1px solid #8a888c;border-top:none;border-radius:0 0 5px 5px;box-shadow:0 0 0 1px rgba(30,30,30,.45);background:linear-gradient(rgba(255,255,255,.2),rgba(255,255,255,.1))"></div>
 <div class="a" style="left:402px;top:0;width:1px;height:17px;background:#8a888c"></div>
 <div class="a" style="left:429px;top:0;width:1px;height:17px;background:#8a888c"></div>
 <div class="a" style="left:384px;top:9px;width:10px;height:3px;background:#9b999d;border-radius:1px"></div>
 <div class="a" style="left:411px;top:4px;width:10px;height:8px;border:2px solid #f4f4f4;background:#6a686c;box-shadow:0 0 0 1px rgba(40,40,40,.7)"></div>
 <svg style="left:449px;top:4px" width="10" height="9" viewBox="0 0 10 9"><path d="M1.300 1 L8.700 8 M8.700 1 L1.300 8" stroke="#2a2a2a" stroke-width="3.600"/><path d="M1.300 1 L8.700 8 M8.700 1 L1.300 8" stroke="#f6f6f6" stroke-width="2.200"/></svg>
 <div id="cl" class="a"><div class="a" style="left:0;top:1px;width:469px;height:459px">
  <!-- Vorgaben -->
  <div class="gb" style="left:10px;top:17px;width:334px;height:139px"></div>
  <span class="gl" style="left:27px;top:10px">Vorgaben</span>
  <div class="a" style="left:306px;top:10px;width:22px;height:14px;background:#ececec"></div>
  <svg style="left:311px;top:11px" width="16" height="12" viewBox="0 0 16 12"><circle cx="5.500" cy="5.500" r="3.200" fill="none" stroke="#222" stroke-width="2"/><path d="M5.500 0v11M0 5.500h11M1.600 1.600l7.800 7.800M9.400 1.600l-7.800 7.800" stroke="#222" stroke-width="1.300"/><circle cx="5.500" cy="5.500" r="1.500" fill="#ececec"/><path d="M11.500 8.500h4l-2 2z" fill="#222"/></svg>
  <div class="a" style="left:21px;top:32px;width:313px;height:113px;background:#c8c8c8;border:1px solid #8a8a8a;border-right-color:#d8d8d8;border-bottom-color:#d8d8d8"></div>
  <div class="a" style="left:317px;top:33px;width:16px;height:111px;background:#eee;border-left:1px solid #dcdcdc"></div>
  <div class="a" style="left:321px;top:40px;border-left:4px solid transparent;border-right:4px solid transparent;border-bottom:4px solid #a0a0a0"></div>
  <div class="a" style="left:321px;top:135px;border-left:4px solid transparent;border-right:4px solid transparent;border-top:4px solid #a0a0a0"></div>
  <!-- swatches row 1 -->
  <div class="sw" style="left:22px;top:33px;background:linear-gradient(135deg,#8c0a46 15%,#fff 72%)"></div>
  <div class="sw chk" style="left:54px;top:33px"><div class="sw" style="left:0;top:0;background:linear-gradient(135deg,#8c0a46 15%,rgba(140,10,70,0) 66%)"></div></div>
  <div class="sw" style="left:86px;top:33px;background:linear-gradient(135deg,#000 22%,#fff 70%)"></div>
  <div class="sw" style="left:118px;top:33px;background:linear-gradient(135deg,#e0101a 20%,#0a6a1e 82%)"></div>
  <div class="sw" style="left:150px;top:33px;background:linear-gradient(135deg,#2a0a7a 15%,#ff7a00 85%)"></div>
  <div class="sw" style="left:182px;top:33px;background:linear-gradient(135deg,#0a10c8 25%,#ff1400 55%,#ffe800 88%)"></div>
  <div class="sw" style="left:214px;top:33px;background:linear-gradient(135deg,#0a12b4 27%,#fff01e 50%,#0a12b4 73%)"></div>
  <div class="sw" style="left:246px;top:33px;background:linear-gradient(135deg,#ff6e00 15%,#fff01e 50%,#ff6e00 88%)"></div>
  <div class="sw" style="left:278px;top:33px;background:linear-gradient(135deg,#6e1482 18%,#0a5a1e 55%,#ff7a00 92%)"></div>
  <!-- swatches row 2 -->
  <div class="sw" style="left:22px;top:65px;background:linear-gradient(135deg,#ffe000 0,#ffe000 26%,#6e1482 44%,#ff7a00 58%,#0a2a82 78%)"></div>
  <div class="sw" style="left:54px;top:65px;background:linear-gradient(135deg,#a84a14 8%,#f6d2be 45%,#7a3a1e 68%,#fbe4da 92%)"></div>
  <div class="sw" style="left:86px;top:65px;background:linear-gradient(135deg,#2a82d2 18%,#fff 49%,#b4821e 51%,#e8b81e 60%,#fff 82%)"></div>
  <div class="sw" style="left:118px;top:65px;background:linear-gradient(135deg,#ff0000 18%,#ff00ff 32%,#0000ff 44%,#00ffff 56%,#00ff00 68%,#ffff00 80%,#ff0000 92%)"></div>
  <div class="sw chk" style="left:150px;top:65px"><div class="sw" style="left:0;top:0;background:linear-gradient(135deg,rgba(255,0,0,0) 14%,#ff0000 26%,#ffff00 38%,#00ff00 50%,#00ffff 60%,#0000ff 70%,#ff00ff 80%,rgba(255,0,255,0) 92%)"></div></div>
  <div class="sw chk" style="left:182px;top:65px"><div class="sw" style="left:0;top:0;background:linear-gradient(135deg,#8c0a46 0,#8c0a46 22%,rgba(0,0,0,0) 22%),repeating-linear-gradient(135deg,#fff 0 2.2px,#8c0a46 2.2px 4.700px);-webkit-mask-image:linear-gradient(135deg,#000 60%,transparent 88%)"></div></div>
  <div class="sw chk" style="left:214px;top:65px"><div class="sw" style="left:0;top:0;background:linear-gradient(135deg,rgba(110,110,110,.65) 5%,rgba(255,255,255,0) 75%)"></div></div>
  <!-- buttons -->
  <div class="wb" style="left:360px;top:17px;border-color:#3c7fb1;box-shadow:inset 0 0 0 1px #7fd6f6,inset 0 0 0 2px rgba(255,255,255,.7)">OK</div>
  <div class="wb" style="left:360px;top:45px">Abbrechen</div>
  <div class="wb" style="left:360px;top:80px">Laden...</div>
  <div class="wb" style="left:360px;top:108px">Speichern...</div>
  <div class="wb" style="left:360px;top:174px">Neu</div>
  <!-- name -->
  <span class="lb" style="left:10px;top:175px">Name:</span>
  <div class="inp" style="left:61px;top:172px;width:283px;height:20px;border-color:#e3e3e3"></div>
  <span class="lb" style="left:67px;top:175px">Benutzerdefiniert</span>
  <!-- gradient group -->
  <div class="gb" style="left:11px;top:215px;width:446px;height:221px"></div>
  <div class="a" style="left:25px;top:208px;width:190px;height:16px;background:#ececec"></div>
  <span class="lb" style="left:47px;top:212px">Verlaufsart:</span>
  <div class="inp" style="left:113px;top:208px;width:109px;height:23px;border-color:#e6e6e6;border-radius:3px"></div>
  <span class="lb" style="left:120px;top:212px">Durchgehend</span>
  <div class="a" style="left:209px;top:218px;border-left:4px solid transparent;border-right:4px solid transparent;border-top:4px solid #111"></div>
  <span class="lb" style="left:36px;top:243px">Glättung:</span>
  <div class="inp" style="left:91px;top:239px;width:54px;height:23px;border-color:#b5b5b5"></div>
  <div class="a" style="left:123px;top:240px;width:21px;height:21px;border-left:1px solid #b5b5b5;background:linear-gradient(#e9e9ef 0,#d4d4dc 50%,#c6c6ce 100%)"></div>
  <div class="a" style="left:132px;top:248px;border-top:3px solid transparent;border-bottom:3px solid transparent;border-left:4px solid #5b5b8a"></div>
  <span class="lb" style="left:98px;top:244px">100</span>
  <span class="lb" style="left:150px;top:243px">%</span>
  <!-- opacity stops -->
  <svg style="left:22px;top:270px" width="12" height="17" viewBox="0 0 12 17"><path d="M0.500 0.500h10v10.500l-5 5l-5-5z" fill="#fff" stroke="#555" stroke-width="1"/><rect x="2" y="2" width="7" height="7" fill="#000"/></svg>
  <svg style="left:435px;top:270px" width="12" height="17" viewBox="0 0 12 17"><path d="M0.500 0.500h10v10.500l-5 5l-5-5z" fill="#fff" stroke="#555" stroke-width="1"/><rect x="2" y="2" width="7" height="7" fill="#000"/></svg>
  <!-- gradient bar -->
  <div class="a" style="left:26px;top:288px;width:416px;height:27px;background:linear-gradient(90deg,#6e6e6e,#3a3a3a 55%,#0c0c0c);border-top:1px solid #444;border-bottom:1px solid #222"></div>
  <!-- color stops -->
  <svg style="left:22px;top:316px" width="12" height="18" viewBox="0 0 12 18"><path d="M0.500 16.500h10v-10.500l-5-5.500l-5 5.500z" fill="#fff" stroke="#555" stroke-width="1"/><rect x="2" y="8" width="7" height="7" fill="#6e6e6e" stroke="#444" stroke-width=".6"/></svg>
  <svg style="left:435px;top:316px" width="12" height="18" viewBox="0 0 12 18"><path d="M0.500 16.500h10v-10.500l-5-5.500l-5 5.500z" fill="#fff" stroke="#333" stroke-width="1"/><rect x="2" y="8" width="7" height="7" fill="#0a0a0a"/></svg>
  <!-- stops group -->
  <div class="gb" style="left:20px;top:350px;width:430px;height:78px"></div>
  <span class="gl" style="left:37px;top:342px">Unterbrechungen</span>
  <span class="lb dis" style="left:30px;top:367px">Deckkraft:</span>
  <div class="inp" style="left:91px;top:363px;width:54px;height:23px;background:#f4f4f4;border-color:#bcbcbc"></div>
  <div class="a" style="left:123px;top:364px;width:1px;height:21px;background:#bcbcbc"></div>
  <div class="a" style="left:133px;top:372px;border-top:3px solid transparent;border-bottom:3px solid transparent;border-left:3px solid #8a8a8a"></div>
  <span class="lb dis" style="left:150px;top:367px">%</span>
  <span class="lb dis" style="left:190px;top:368px">Position:</span>
  <div class="inp" style="left:241px;top:365px;width:64px;height:20px;background:#efefef;border-color:#bcbcbc"></div>
  <span class="lb dis" style="left:309px;top:367px">%</span>
  <div class="wb dis" style="left:340px;top:366px">Löschen</div>
  <span class="lb dis" style="left:52px;top:400px">Farbe:</span>
  <div class="inp" style="left:92px;top:397px;width:63px;height:21px;background:#ececec;border-color:#bcbcbc;border-radius:0"></div>
  <div class="inp" style="left:156px;top:397px;width:17px;height:21px;background:#efefef;border-color:#bcbcbc;border-radius:0"></div>
  <div class="a" style="left:161px;top:402px;border-top:5px solid transparent;border-bottom:5px solid transparent;border-left:7px solid #b0b0b0"></div>
  <span class="lb dis" style="left:190px;top:400px">Position:</span>
  <div class="inp" style="left:241px;top:397px;width:64px;height:20px;background:#efefef;border-color:#bcbcbc"></div>
  <span class="lb dis" style="left:309px;top:399px">%</span>
  <div class="wb dis" style="left:340px;top:398px">Löschen</div>
  <!-- grip -->
  <svg style="left:457px;top:446px" width="12" height="12" viewBox="0 0 12 12"><path d="M9 2h1v1h-1zM6 5h1v1h-1zM9 5h1v1h-1zM3 8h1v1h-1zM6 8h1v1h-1zM9 8h1v1h-1z" fill="#a8a8a8"/><path d="M10 3h1v1h-1zM7 6h1v1h-1zM10 6h1v1h-1zM4 9h1v1h-1zM7 9h1v1h-1zM10 9h1v1h-1z" fill="#fff"/></svg>
 </div></div>
</div>
<!-- COLLAPSED ICON STRIP -->
<style>
#strip{left:1368px;top:62px;width:37px;height:948px;background:#535353}
.sb{position:absolute;left:0;width:37px;height:41px;border-top:1px solid #656565;border-bottom:1px solid #2e2e2e}
.sb i{position:absolute;left:9px;top:3px;width:19px;height:3px;background:repeating-linear-gradient(90deg,#2c2c2c 0 1px,transparent 1px 2px)}
</style>
<div id="strip" class="a">
 <div class="a" style="left:0;top:0;width:37px;height:12px;background:#3a3a3a;border-bottom:1px solid #2c2c2c"></div>
 <svg style="left:26px;top:3px" width="8" height="6" viewBox="0 0 8 6"><path d="M3.500 0L0 3l3.500 3zM7.500 0L4 3l3.500 3z" fill="#d0d0d0"/></svg>
 <div class="sb" style="top:12px"><i></i>
  <svg style="left:11px;top:12px" width="17" height="19" viewBox="0 0 18 20"><rect x="1.500" y="1.500" width="5" height="5" fill="none" stroke="#d0d0d0" stroke-width="1.300"/><rect x="1.500" y="8" width="5" height="5" fill="none" stroke="#d0d0d0" stroke-width="1.300"/><rect x="1" y="14" width="6" height="5" fill="#bdbdbd"/><path d="M10 15.500c4.500-2 5.500-7 2.500-11" fill="none" stroke="#d0d0d0" stroke-width="1.800"/><path d="M9 3l6 .5l-3.500 4z" fill="#d0d0d0"/></svg></div>
 <div class="sb" style="top:53px"><i></i>
  <svg style="left:10px;top:15px" width="18" height="18" viewBox="0 0 18 18"><circle cx="9" cy="9" r="8" fill="#cfcfcf"/><rect x="7.500" y="7.500" width="3" height="6.500" fill="#535353"/><circle cx="9" cy="4.800" r="1.700" fill="#535353"/></svg></div>
 <div class="sb" style="top:94px"><i></i>
  <svg style="left:11px;top:16px" width="17" height="13" viewBox="0 0 17 13"><rect x=".5" y=".5" width="16" height="12" fill="#8a8a8a" stroke="#d0d0d0"/><rect x="2" y="2" width="3.500" height="4" fill="#2e2e2e"/><rect x="6.700" y="2" width="3.500" height="4" fill="#666"/><rect x="11.400" y="2" width="3.500" height="4" fill="#b0b0b0"/><rect x="2" y="7.200" width="3.500" height="4" fill="#a0a0a0"/><rect x="6.700" y="7.200" width="3.500" height="4" fill="#777"/><rect x="11.400" y="7.200" width="3.500" height="4" fill="#444"/></svg></div>
 <div class="sb" style="top:135px"><i></i>
  <div class="a" style="left:13px;top:15px;width:14px;height:13px;background:linear-gradient(#8a8a8a,#cfcfcf)"></div>
  <span class="t" style="left:10px;top:20px;font-family:'Liberation Serif',serif;font-style:italic;font-size:15px;color:#e6e6e6;text-shadow:0 0 2px #222,0 0 1px #222">fx</span></div>
</div>
<div class="a" style="left:1405px;top:62px;width:3px;height:948px;background:#2e2e2e"></div>
<!-- RIGHT PANELS -->
<style>
#rp .pdd{font-size:10px}
#rp{left:1408px;top:62px;width:271px;height:948px;background:#535353;overflow:hidden}
.ptb{position:absolute;left:0;width:271px;height:17px;background:#3a3a3a;border-bottom:1px solid #2e2e2e}
.ptab{position:absolute;top:0;height:17px;line-height:18px;font-size:10px;font-weight:bold;padding-left:7px;white-space:nowrap;color:#a6a6a6;background:#424242;border-right:1px solid #303030}
.ptab.on{background:#535353;color:#f2f2f2;height:18px}
.pm{position:absolute;left:253px;top:5px}
.sep{position:absolute;left:0;width:230px;height:2px;border-top:1px solid #3d3d3d;border-bottom:1px solid #626262}
.df{position:absolute;height:18px;background:#3a3a3a;border:1px solid #323232;box-shadow:0 1px 0 #666;color:#7f7f7f;font-size:10px;line-height:17px;padding-left:5px;white-space:nowrap}
.dbt{position:absolute;width:19px;height:18px;border:1px solid #323232;border-radius:0 2px 2px 0;background:linear-gradient(#767676,#5f5f5f)}
.dbt:after{content:"";position:absolute;left:5px;top:7px;border-left:3.500px solid transparent;border-right:3.500px solid transparent;border-top:4px solid #f0f0f0}
.dbt.dk:after{border-top-color:#9a9a9a}
.ic{position:absolute;font-family:"Liberation Serif",serif;color:#d4d4d4;white-space:nowrap;line-height:1}
.lrow{position:absolute;left:0;width:256px;height:30px;background:#535353;border-bottom:1px solid #3e3e3e}
.lrow .nm{position:absolute;left:77px;top:11px;font-size:10px;color:#f0f0f0;line-height:1;white-space:nowrap}
.th{position:absolute;left:34px;top:3px;width:33px;height:23px;border:1px solid #111;background:#fff;box-shadow:0 0 0 1px #fff inset}
.th.ck{background-color:#fff;background-image:linear-gradient(45deg,#ccc 25%,transparent 25%,transparent 75%,#ccc 75%),linear-gradient(45deg,#ccc 25%,transparent 25%,transparent 75%,#ccc 75%);background-size:8px 8px;background-position:0 0,4px 4px}
.eyecol{position:absolute;left:0;top:0;width:30px;height:29px;border-right:1px solid #3e3e3e;background:#535353}
</style>
<div id="rp" class="a">
 <div class="a" style="left:0;top:0;width:271px;height:12px;background:#3a3a3a"></div>
 <svg style="left:260px;top:3px" width="8" height="6" viewBox="0 0 8 6"><path d="M0 0l3.500 3L0 6zM4 0l3.500 3L4 6z" fill="#d0d0d0"/></svg>
 <!-- ZEICHEN -->
 <div class="ptb" style="top:12px"><div class="ptab on" style="left:0;width:50px">Zeichen</div><div class="ptab" style="left:50px;width:46px">Absatz</div>
  <svg class="pm" width="13" height="8" viewBox="0 0 13 8"><path d="M0 1h4.500L2.200 4z" fill="#d0d0d0"/><path d="M5.500 .5h7M5.500 3h7M5.500 5.500h7M5.500 8h7" stroke="#d0d0d0" stroke-width="1"/></svg></div>
 <div class="a" style="left:10px;top:38px;width:90px;height:15px;background:#f2f2f2;border:1px solid #2e2e2e;color:#555;font-size:10px;line-height:13px;padding-left:4px">Arial</div>
 <div class="dbt dk" style="left:100px;top:36px;height:19px;background:linear-gradient(#666,#585858);border-color:#444"></div>
 <div class="a" style="left:131px;top:38px;width:56px;height:15px;background:#f2f2f2;border:1px solid #2e2e2e;color:#555;font-size:10px;line-height:13px;padding-left:4px">Regular</div>
 <div class="dbt dk" style="left:187px;top:36px;height:19px;background:linear-gradient(#666,#585858);border-color:#444"></div>
 <div class="sep" style="top:60px"></div>
 <!-- size row -->
 <span class="ic" style="left:4px;top:70px;font-size:10px;font-weight:bold">T</span><span class="ic" style="left:9px;top:64px;font-size:17px">T</span>
 <div class="df" style="left:23px;top:66px;width:79px">30 Pt</div><div class="dbt" style="left:101px;top:66px"></div>
 <svg style="left:127px;top:66px" width="16" height="18" viewBox="0 0 16 18"><path d="M3 1.500h12M5 9h10" stroke="#d4d4d4" stroke-width="1"/><path d="M2.500 3v10" stroke="#d4d4d4" stroke-width="1"/><path d="M2.500 1.500l2 3h-4zM2.500 14.500l2-3h-4z" fill="#d4d4d4"/><text x="7" y="8" font-family="Liberation Sans" font-size="7" fill="#d4d4d4">A</text><text x="7" y="17" font-family="Liberation Sans" font-size="7" fill="#d4d4d4">A</text></svg>
 <div class="df" style="left:147px;top:66px;width:59px">12 Pt</div><div class="dbt" style="left:205px;top:66px"></div>
 <!-- kerning row -->
 <span class="ic" style="left:2px;top:91px;font-family:'Liberation Sans',sans-serif;font-size:12.500px;letter-spacing:-1.800px">V/A</span><svg style="left:8px;top:104px" width="11" height="5" viewBox="0 0 11 5"><path d="M2 2.500h9" stroke="#d4d4d4"/><path d="M0 2.500l3-2.500v5z" fill="#d4d4d4"/></svg>
 <div class="df" style="left:23px;top:90px;width:79px">Metrisch</div><div class="dbt" style="left:101px;top:90px"></div>
 <div class="a" style="left:127px;top:91px;width:19px;height:11px;background:#cfcfcf;color:#333;font-size:11px;font-weight:bold;line-height:11px;letter-spacing:-1px;padding-left:1px">VA</div>
 <svg style="left:127px;top:103px" width="19" height="5" viewBox="0 0 19 5"><path d="M2 2.500h15" stroke="#d4d4d4"/><path d="M0 2.500l3-2.500v5zM19 2.500l-3-2.500v5z" fill="#d4d4d4"/></svg>
 <div class="df" style="left:147px;top:90px;width:59px">0</div><div class="dbt" style="left:205px;top:90px"></div>
 <div class="sep" style="top:112px"></div>
 <!-- scale rows -->
 <svg style="left:3px;top:120px" width="8" height="16" viewBox="0 0 8 16"><path d="M3.500 2v12" stroke="#d4d4d4"/><path d="M3.500 0l2.500 3.500h-5zM3.500 16l2.500-3.500h-5z" fill="#d4d4d4"/></svg>
 <span class="ic" style="left:10px;top:117px;font-size:19px">T</span>
 <div class="df" style="left:24px;top:118px;width:54px">100%</div>
 <span class="ic" style="left:145px;top:115px;font-size:17px;font-weight:bold;transform:scaleX(1.250);transform-origin:0 0">T</span>
 <svg style="left:143px;top:131px" width="19" height="5" viewBox="0 0 19 5"><path d="M2 2.500h15" stroke="#d4d4d4"/><path d="M0 2.500l3-2.500v5zM19 2.500l-3-2.500v5z" fill="#d4d4d4"/></svg>
 <div class="df" style="left:165px;top:118px;width:54px">100%</div>
 <span class="ic" style="left:3px;top:141px;font-family:'Liberation Sans',sans-serif;font-size:14px;text-decoration:underline">A</span><span class="ic" style="left:14px;top:139px;font-family:'Liberation Sans',sans-serif;font-size:9px;text-decoration:underline">a</span>
 <svg style="left:14px;top:150px" width="5" height="8" viewBox="0 0 5 8"><path d="M2.500 2v6" stroke="#d4d4d4"/><path d="M2.500 0l2.500 3h-5z" fill="#d4d4d4"/></svg>
 <div class="df" style="left:24px;top:138px;width:54px">0 Pt</div>
 <span class="t" style="left:128px;top:142px;font-size:10px;font-weight:bold;color:#f2f2f2">Farbe:</span>
 <div class="a" style="left:165px;top:138px;width:54px;height:18px;background:#8d1045;border:1px solid #3a2a30"></div>
 <div class="sep" style="top:160px"></div>
 <!-- T styles -->
 <span class="ic" style="left:25px;top:169px;font-size:16px;font-weight:bold;font-weight:bold">T</span>
 <span class="ic" style="left:50px;top:169px;font-size:16px;font-weight:bold;font-style:italic">T</span>
 <span class="ic" style="left:69px;top:169px;font-size:16px;font-weight:bold">TT</span>
 <span class="ic" style="left:94px;top:169px;font-size:16px;font-weight:bold">T<span style="font-size:11px">T</span></span>
 <span class="ic" style="left:119px;top:169px;font-size:16px;font-weight:bold">T<span style="font-size:8px;vertical-align:7px">1</span></span>
 <span class="ic" style="left:144px;top:169px;font-size:16px;font-weight:bold">T<span style="font-size:8px;vertical-align:-2px">1</span></span>
 <span class="ic" style="left:170px;top:169px;font-size:16px;font-weight:bold;text-decoration:underline">T</span>
 <span class="ic" style="left:194px;top:169px;font-size:16px;font-weight:bold;text-decoration:line-through">T</span>
 <div class="sep" style="top:192px"></div>
 <!-- opentype -->
 <div class="a" style="left:20px;top:198px;width:22px;height:22px;background:#333;border:1px solid #2a2a2a;border-radius:3px;box-shadow:0 1px 0 #676767"></div>
 <span class="ic" style="left:25px;top:199px;font-size:19px;color:#e8e8e8">fi</span>
 <span class="ic" style="left:49px;top:199px;font-size:19px;font-style:italic;color:#858585">&#963;</span>
 <span class="ic" style="left:73px;top:199px;font-size:19px;color:#e0e0e0">st</span>
 <span class="ic" style="left:96px;top:199px;font-size:19px;font-style:italic;color:#858585">A</span>
 <span class="ic" style="left:120px;top:201px;font-size:17px;color:#858585;border-top:1px solid #858585">aa</span>
 <span class="ic" style="left:146px;top:199px;font-size:19px;font-style:italic;color:#858585">T</span>
 <span class="ic" style="left:168px;top:199px;font-size:19px;color:#858585">1<span style="font-size:10px;vertical-align:7px">st</span></span>
 <span class="ic" style="left:192px;top:199px;font-size:19px;color:#858585">&#189;</span>
 <div class="sep" style="top:224px"></div>
 <div class="pdd ud" style="left:8px;top:231px;width:115px;height:19px;color:#bdbdbd;background:linear-gradient(#606060,#555);border-color:#3c3c3c;line-height:17px;padding-left:8px">Deutsch: neue Re...</div>
 <span class="t" style="left:129px;top:232px;font-size:10px;color:#e0e0e0">a</span><span class="t" style="left:135px;top:233px;font-size:14px;color:#e0e0e0">a</span>
 <div class="pdd ud" style="left:150px;top:231px;width:73px;height:19px;color:#bdbdbd;background:linear-gradient(#606060,#555);border-color:#3c3c3c;line-height:17px;padding-left:7px">Scharf</div>
 <div class="a" style="left:0;top:255px;width:271px;height:3px;background:#2c2c2c"></div>
 <!-- ABSATZFORMATE -->
 <div class="ptb" style="top:258px"><div class="ptab on" style="left:0;width:83px">Absatzformate</div><div class="ptab" style="left:83px;width:89px">Zeichenformate</div>
  <svg class="pm" width="13" height="8" viewBox="0 0 13 8"><path d="M0 1h4.500L2.200 4z" fill="#d0d0d0"/><path d="M5.500 .5h7M5.500 3h7M5.500 5.500h7M5.500 8h7" stroke="#d0d0d0" stroke-width="1"/></svg></div>
 <div class="a" style="left:0;top:276px;width:255px;height:127px;background:#464646"></div>
 <div class="a" style="left:255px;top:276px;width:16px;height:127px;background:#404040;border-left:1px solid #3a3a3a"></div>
 <div class="a" style="left:0;top:277px;width:255px;height:22px;background:#596a82"></div>
 <span class="t" style="left:8px;top:282px;font-size:10px;font-style:italic;color:#fff">Basisabsatz</span>
 <div class="a" style="left:0;top:403px;width:271px;height:18px;background:#535353;border-top:1px solid #626262"></div>
 <svg style="left:138px;top:406px" width="16" height="14" viewBox="0 0 16 14"><path d="M5 4.500a4.200 4.200 0 1 1 1.500 6.500" fill="none" stroke="#7e7e7e" stroke-width="1.500"/><path d="M1.500 5.500l4.500-3.500l.5 5z" fill="#7e7e7e"/><path d="M2 12.500h11" stroke="#7e7e7e"/></svg>
 <svg style="left:168px;top:406px" width="14" height="12" viewBox="0 0 14 12"><path d="M1 7l3.500 4L13 1" fill="none" stroke="#7e7e7e" stroke-width="2.200"/></svg>
 <svg style="left:201px;top:407px" width="11" height="11" viewBox="0 0 13 13"><path d="M1 1h11v11h-6v-5h-5z" fill="#d4d4d4"/><path d="M1 8l4 4v-4z" fill="#e6e6e6"/></svg>
 <svg style="left:229px;top:405px" width="13" height="14" viewBox="0 0 13 14"><path d="M1 3h11M4.500 3v-1.500h4V3" fill="none" stroke="#7e7e7e" stroke-width="1.200"/><path d="M2 4.500h9l-1 9h-7z" fill="none" stroke="#7e7e7e" stroke-width="1.200"/><path d="M4.700 6v6M6.500 6v6M8.300 6v6" stroke="#7e7e7e" stroke-width=".9"/></svg>
 <svg style="left:260px;top:410px" width="10" height="10" viewBox="0 0 10 10"><path d="M8 0h1v1h-1zM6 2h1v1h-1zM8 2h1v1h-1zM4 4h1v1h-1zM6 4h1v1h-1zM8 4h1v1h-1zM2 6h1v1h-1zM4 6h1v1h-1zM6 6h1v1h-1zM8 6h1v1h-1z" fill="#7a7a7a"/></svg>
 <div class="a" style="left:0;top:421px;width:271px;height:3px;background:#2c2c2c"></div>
 <!-- EBENEN -->
 <div class="ptb" style="top:424px"><div class="ptab on" style="left:0;width:47px">Ebenen</div><div class="ptab" style="left:47px;width:46px">Kanäle</div><div class="ptab" style="left:93px;width:43px">Pfade</div>
  <svg class="pm" width="13" height="8" viewBox="0 0 13 8"><path d="M0 1h4.500L2.200 4z" fill="#d0d0d0"/><path d="M5.500 .5h7M5.500 3h7M5.500 5.500h7M5.500 8h7" stroke="#d0d0d0" stroke-width="1"/></svg></div>
 <!-- filter row -->
 <div class="pdd ud" style="left:5px;top:446px;width:74px;height:19px;color:#bdbdbd;background:linear-gradient(#606060,#555);border-color:#3c3c3c;line-height:17px;padding-left:21px">Art</div>
 <svg style="left:10px;top:450px" width="11" height="11" viewBox="0 0 11 11"><circle cx="6.500" cy="4.500" r="3.200" fill="none" stroke="#d8d8d8" stroke-width="1.500"/><path d="M4.200 6.800L.8 10.200" stroke="#d8d8d8" stroke-width="1.800"/></svg>
 <svg style="left:113px;top:449px" width="14" height="12" viewBox="0 0 14 12"><rect x=".5" y=".5" width="13" height="11" fill="none" stroke="#d8d8d8"/><path d="M2 10l3.500-4.500l2.500 3l1.500-1.500l2.500 3z" fill="#d8d8d8"/><circle cx="10" cy="3.500" r="1.200" fill="#d8d8d8"/></svg>
 <svg style="left:137px;top:449px" width="12" height="12" viewBox="0 0 12 12"><circle cx="6" cy="6" r="5.300" fill="none" stroke="#d8d8d8" stroke-width="1.200"/><path d="M2.300 9.700a5.300 5.300 0 0 1 7.400-7.400z" fill="#d8d8d8"/></svg>
 <span class="ic" style="left:161px;top:446px;font-size:17px;color:#d8d8d8">T</span>
 <svg style="left:185px;top:449px" width="13" height="13" viewBox="0 0 13 13"><rect x="2" y="2" width="9" height="9" fill="none" stroke="#d8d8d8" stroke-width="1.200"/><path d="M0 0h3.500v3.500H0zM9.500 0H13v3.500H9.500zM0 9.500h3.500V13H0zM9.500 9.500H13V13H9.500z" fill="#d8d8d8"/><path d="M1 1h1.500v1.500H1zM10.500 1H12v1.500h-1.500zM1 10.500h1.500V12H1zM10.500 10.500H12V12h-1.500z" fill="#535353"/></svg>
 <svg style="left:209px;top:448px" width="13" height="14" viewBox="0 0 13 14"><path d="M4 .5h5l3 3v7H4z" fill="none" stroke="#d8d8d8" stroke-width="1.100"/><path d="M9 .5v3h3" fill="none" stroke="#d8d8d8"/><rect x=".5" y="7" width="6.500" height="6.500" fill="#bdbdbd"/></svg>
 <div class="a" style="left:257px;top:446px;width:9px;height:18px;background:linear-gradient(#8a8a8a 0,#6a6a6a 50%,#3c3c3c 50%,#3c3c3c);border:1px solid #2e2e2e"></div>
 <div class="sep" style="top:468px;width:271px"></div>
 <!-- blend row -->
 <div class="pdd ud" style="left:5px;top:474px;width:147px;height:19px;color:#bdbdbd;background:linear-gradient(#606060,#555);border-color:#3c3c3c;line-height:17px;padding-left:7px">Normal</div>
 <span class="t" style="left:159px;top:478px;font-size:10px;font-weight:bold;color:#f2f2f2">Deckkraft:</span>
 <div class="df" style="left:210px;top:474px;width:39px">100%</div><div class="dbt" style="left:248px;top:474px"></div>
 <div class="sep" style="top:495px;width:271px"></div>
 <!-- lock row -->
 <span class="t" style="left:6px;top:507px;font-size:10px;color:#f2f2f2">Fixieren:</span>
 <div class="a" style="left:54px;top:506px;width:11px;height:11px;border:1px solid #d0d0d0;background-color:#535353;background-image:linear-gradient(45deg,#d0d0d0 25%,transparent 25%,transparent 75%,#d0d0d0 75%),linear-gradient(45deg,#d0d0d0 25%,transparent 25%,transparent 75%,#d0d0d0 75%);background-size:6px 6px;background-position:0 0,3px 3px"></div>
 <svg style="left:74px;top:503px" width="16" height="16" viewBox="0 0 16 16"><path d="M15 1L8 9.500l1.500 1.200z" fill="#d8d8d8"/><path d="M7.500 10c-2.500 0-2.500 2.500-6.500 3.500c3.500 1.500 7 .5 8-2z" fill="#d8d8d8"/></svg>
 <svg style="left:97px;top:504px" width="14" height="14" viewBox="0 0 14 14"><path d="M7 2v10M2 7h10" stroke="#d8d8d8" stroke-width="1.200"/><path d="M7 0l2.500 3h-5zM7 14l2.500-3h-5zM0 7l3-2.500v5zM14 7l-3-2.500v5z" fill="#d8d8d8"/></svg>
 <svg style="left:120px;top:503px" width="12" height="15" viewBox="0 0 12 15"><path d="M3 7V4.500a3 3 0 0 1 6 0V7" fill="none" stroke="#d8d8d8" stroke-width="1.700"/><rect x="1" y="7" width="10" height="7.500" fill="#d8d8d8"/><rect x="5.200" y="9.500" width="1.600" height="3" fill="#535353"/></svg>
 <span class="t" style="left:173px;top:505px;font-size:10px;font-weight:bold;color:#f2f2f2">Fläche:</span>
 <div class="df" style="left:210px;top:502px;width:39px">100%</div><div class="dbt" style="left:248px;top:502px"></div>
 <div class="a" style="left:0;top:526px;width:271px;height:1px;background:#3e3e3e"></div>
 <!-- layers -->
 <div class="a" style="left:0;top:527px;width:256px;height:421px;background:#464646"></div>
 <div class="a" style="left:256px;top:527px;width:15px;height:421px;background:#404040;border-left:1px solid #3a3a3a"></div>
 <div class="lrow" style="top:527px;background:#596a82"><div class="eyecol"></div><div class="a" style="left:32px;top:1px;width:37px;height:27px;border:1px solid #fff"></div><div class="a" style="left:44px;top:1px;width:13px;height:27px;background:#596a82"></div><div class="a" style="left:32px;top:9px;width:37px;height:11px;background:#596a82"></div><div class="th ck"></div><span class="nm">Ebene 1</span></div>
 <div class="lrow" style="top:557px"><div class="eyecol"></div><div class="th ck"></div><span class="nm">Meine Ebene</span></div>
 <div class="lrow" style="top:587px"><div class="eyecol"></div><div class="th"></div><span class="nm">Vorlage Vorderseite</span>
  <svg style="left:229px;top:8px" width="11" height="14" viewBox="0 0 12 15"><path d="M3 7V4.500a3 3 0 0 1 6 0V7" fill="none" stroke="#d8d8d8" stroke-width="1.700"/><rect x="1" y="7" width="10" height="7.500" fill="#d8d8d8"/><rect x="5.200" y="9.500" width="1.600" height="3" fill="#535353"/></svg></div>
 <div class="lrow" style="top:617px"><div class="eyecol"></div><div class="th"></div><span class="nm">Vorlage Rückseite</span>
  <div class="a" style="left:9px;top:9px;width:12px;height:12px;border:1px solid #6a6a6a;background:#4b4b4b"></div></div>
 <!-- eyes -->
 <svg style="left:9px;top:537px" width="14" height="10" viewBox="0 0 15 10"><path d="M1 5c2.800-5 10.200-5 13 0c-2.800 5-10.200 5-13 0z" fill="#c6c6c6"/><path d="M2.500 5c2.300-3.300 7.700-3.300 10 0c-2.300 3.300-7.700 3.300-10 0z" fill="#8a8a8a"/><circle cx="7.500" cy="4.800" r="2.500" fill="#2c2c2c"/><circle cx="8.300" cy="4" r=".8" fill="#bbb"/></svg>
 <svg style="left:9px;top:567px" width="14" height="10" viewBox="0 0 15 10"><path d="M1 5c2.800-5 10.200-5 13 0c-2.800 5-10.200 5-13 0z" fill="#c6c6c6"/><path d="M2.500 5c2.300-3.300 7.700-3.300 10 0c-2.300 3.300-7.700 3.300-10 0z" fill="#8a8a8a"/><circle cx="7.500" cy="4.800" r="2.500" fill="#2c2c2c"/><circle cx="8.300" cy="4" r=".8" fill="#bbb"/></svg>
 <svg style="left:9px;top:597px" width="14" height="10" viewBox="0 0 15 10"><path d="M1 5c2.800-5 10.200-5 13 0c-2.800 5-10.200 5-13 0z" fill="#c6c6c6"/><path d="M2.500 5c2.300-3.300 7.700-3.300 10 0c-2.300 3.300-7.700 3.300-10 0z" fill="#8a8a8a"/><circle cx="7.500" cy="4.800" r="2.500" fill="#2c2c2c"/><circle cx="8.300" cy="4" r=".8" fill="#bbb"/></svg>
</div>
<!-- bottom strip -->
<div class="a" style="left:0;top:1010px;width:1679px;height:2px;background:linear-gradient(#3e3e3e 0 1px,#5c5c5c 1px 2px)"></div>
<div class="a" style="left:0;top:1010px;width:262px;height:2px;background:linear-gradient(#5a5a5a 0 1px,#929292 1px 2px)"></div>
<div class="a" style="left:262px;top:1010px;width:306px;height:2px;background:linear-gradient(rgba(40,40,40,.45) 0 1px,transparent 1px 2px),repeating-linear-gradient(90deg,#fff 0 58px,#777 58px 62px)"></div>
</body></html>
